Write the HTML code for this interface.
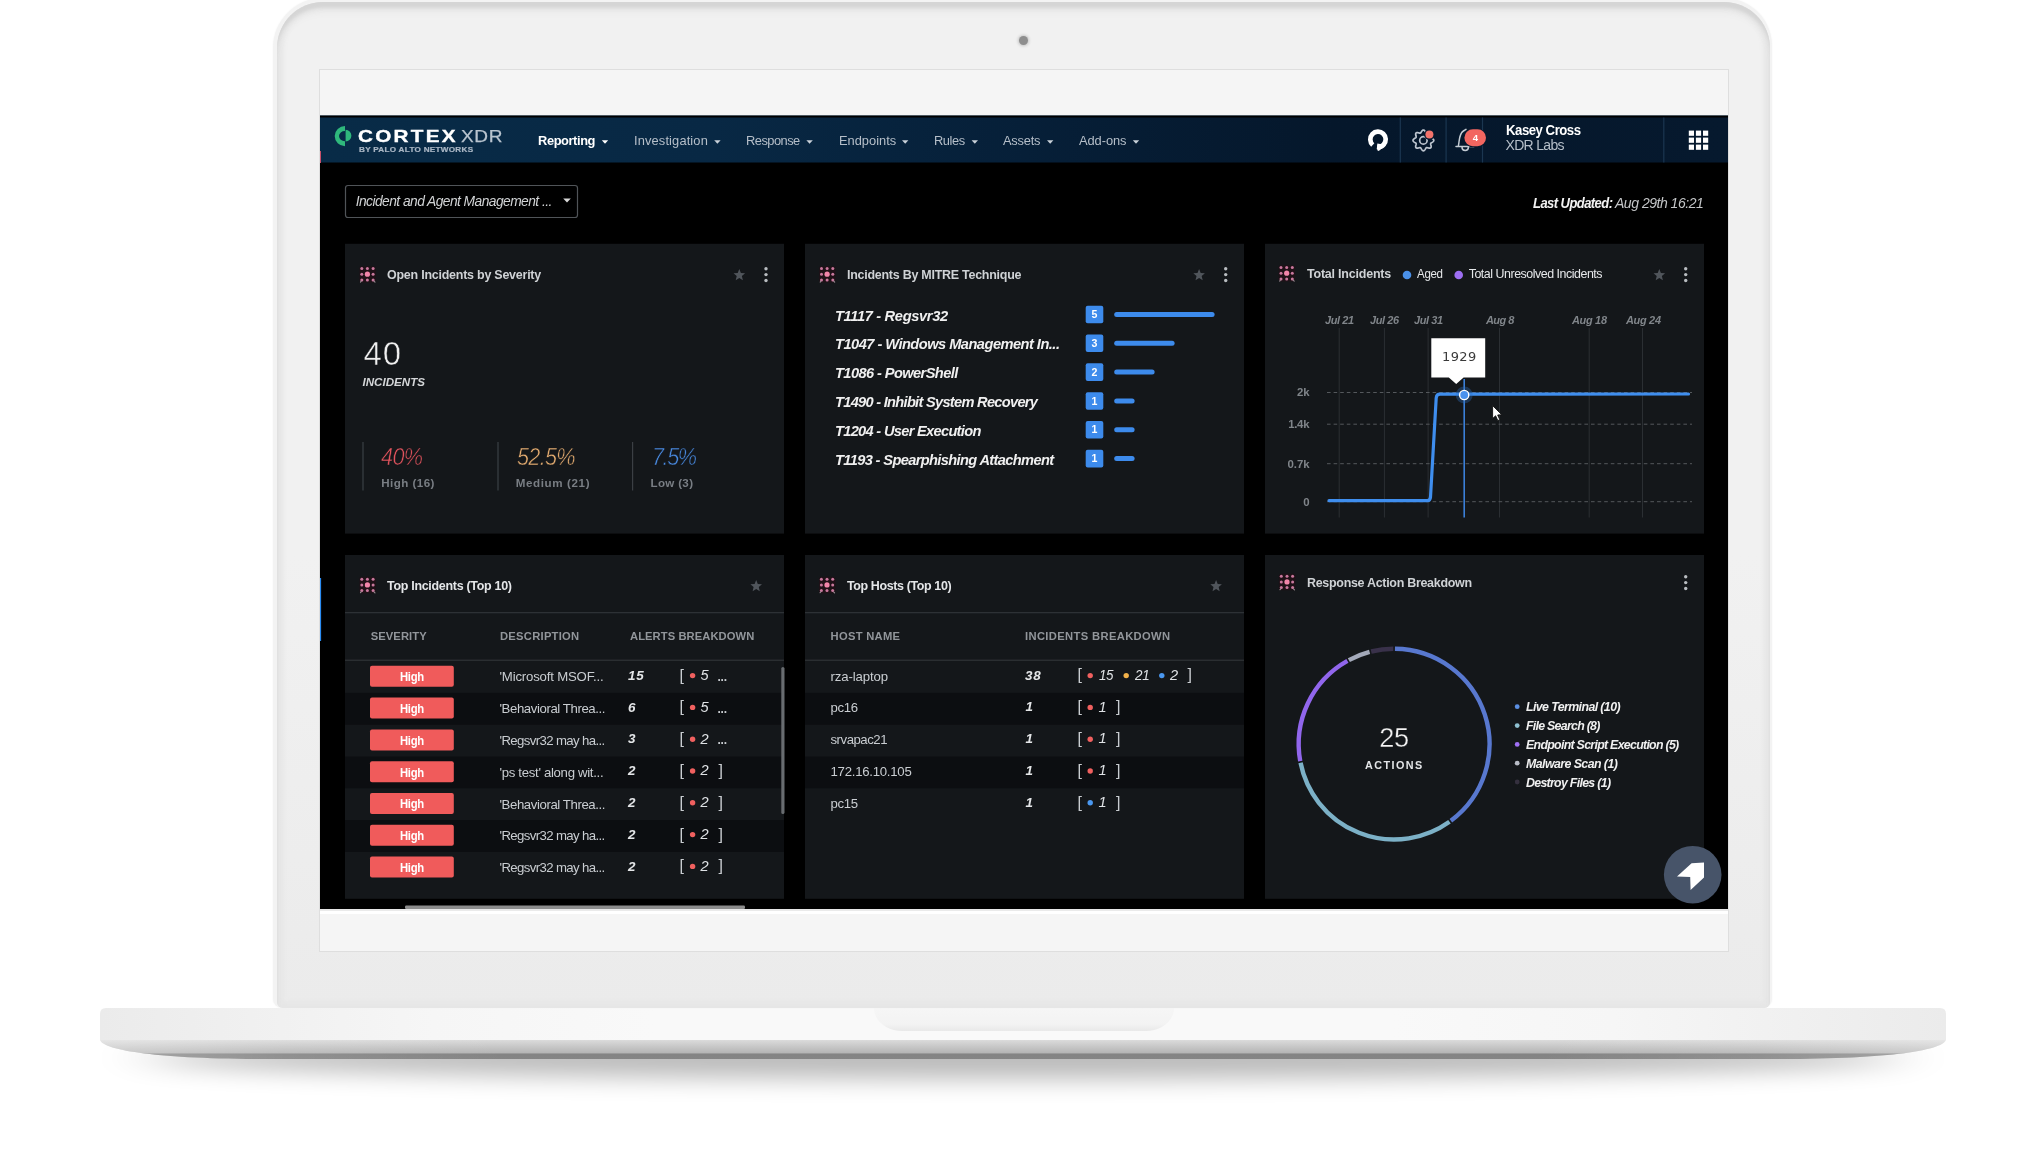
<!DOCTYPE html>
<html lang="en">
<head>
<meta charset="utf-8">
<title>Cortex XDR Dashboard</title>
<style>
*{box-sizing:border-box;margin:0;padding:0}
html,body{width:2036px;height:1176px;overflow:hidden;background:#fff}
body{position:relative;font-family:"Liberation Sans",sans-serif;color:#d8dadc}
.abs{position:absolute}
.t{position:absolute;white-space:nowrap;line-height:1}
/* laptop */
#lidout{left:273px;top:-2px;width:1499px;height:1010px;border-radius:50px 48px 9px 9px;background:#f3f3f3;box-shadow:0 0 2px 0 #f3f3f3}
#lid{left:277px;top:1.5px;width:1493px;height:1006px;border-radius:46px 46px 6px 6px;background:linear-gradient(#f1f1f1 0,#f1f1f1 55%,#ebebeb 100%);box-shadow:inset 0 6px 3px -0.5px #d5d5d5,inset 0 12px 8px -4px #e2e2e2,inset 0 0 5px 6px #e6e6e6}
#cam{left:1019px;top:36px;width:9px;height:9px;border-radius:50%;background:#8e8e8e;box-shadow:0 0 3px 1px #c4c4c4}
#glass{left:319px;top:69px;width:1409.5px;height:883px;background:#f5f5f5;border:1px solid #dedede}
/* app */
#app{left:320px;top:115px;width:1408px;height:794px;background:#000;overflow:hidden}
#scr{left:0;top:0;width:1408px;height:794px;filter:blur(.45px)}
#strip{left:320px;top:909px;width:1408px;height:5px;background:linear-gradient(#e6e6e6 0,#ececec 45%,#fff 50%,#fff 100%)}
</style>
</head>
<body>
<svg class="abs" style="left:0;top:990px" width="2036" height="186" viewBox="0 990 2036 186">
<defs>
<filter id="blur1" x="-10%" y="-200%" width="120%" height="500%"><feGaussianBlur stdDeviation="30 12"/></filter>
<linearGradient id="faceg" x1="0" x2="1" y1="0" y2="0"><stop offset="0" stop-color="#ebebeb"/><stop offset=".18" stop-color="#f6f6f6"/><stop offset=".3" stop-color="#f9f9f9"/><stop offset=".7" stop-color="#f9f9f9"/><stop offset=".82" stop-color="#f6f6f6"/><stop offset="1" stop-color="#ebebeb"/></linearGradient>
<linearGradient id="bevg" x1="0" x2="0" y1="1038" y2="1060" gradientUnits="userSpaceOnUse"><stop offset="0" stop-color="#e9e9e9"/><stop offset=".12" stop-color="#d9d9d9"/><stop offset=".66" stop-color="#b6b6b6"/><stop offset=".74" stop-color="#848484"/><stop offset="1" stop-color="#858585"/></linearGradient>
<linearGradient id="edgeg" x1="100" x2="1946" y1="0" y2="0" gradientUnits="userSpaceOnUse"><stop offset="0" stop-color="#fff" stop-opacity=".3"/><stop offset=".1" stop-color="#fff" stop-opacity=".1"/><stop offset=".22" stop-color="#fff" stop-opacity="0"/><stop offset=".78" stop-color="#fff" stop-opacity="0"/><stop offset=".9" stop-color="#fff" stop-opacity=".1"/><stop offset="1" stop-color="#fff" stop-opacity=".3"/></linearGradient>
<linearGradient id="notchg" x1="0" x2="0" y1="0" y2="1"><stop offset="0" stop-color="#f6f6f6"/><stop offset=".7" stop-color="#f3f3f3"/><stop offset="1" stop-color="#e9e9e9"/></linearGradient>
</defs>
<ellipse cx="1023" cy="1058" rx="880" ry="21" fill="#000" opacity=".27" filter="url(#blur1)"/>
<path id="bev" d="M100,1030 L1946,1030 L1946,1039 C1946,1050 1890,1059 1780,1059 L266,1059 C156,1059 100,1050 100,1039 Z" fill="url(#bevg)"/>
<path d="M100,1030 L1946,1030 L1946,1039 C1946,1050 1890,1059 1780,1059 L266,1059 C156,1059 100,1050 100,1039 Z" fill="url(#edgeg)"/>
<path d="M100,1014 Q100,1008 106,1008 L1940,1008 Q1946,1008 1946,1014 L1946,1040 L100,1040 Z" fill="url(#faceg)"/>
<path d="M874,1008 L1174,1008 C1174,1022 1160,1031 1146,1031 L902,1031 C888,1031 874,1022 874,1008 Z" fill="url(#notchg)"/>
</svg>
<div class="abs" id="lidout"></div>
<div class="abs" id="lid"></div>
<div class="abs" id="cam"></div>
<div class="abs" id="glass"></div>
<div class="abs" id="strip"></div>
<div class="abs" id="app">
<div class="abs" id="scr">
<svg class="abs" style="left:0;top:0" width="1409" height="794" viewBox="320 115 1409 794">
<defs>
<linearGradient id="navg" x1="320" x2="1729" y1="0" y2="0" gradientUnits="userSpaceOnUse"><stop offset="0" stop-color="#082b47"/><stop offset=".28" stop-color="#082844"/><stop offset=".5" stop-color="#061f38"/><stop offset=".72" stop-color="#05172b"/><stop offset="1" stop-color="#06192e"/></linearGradient>
<filter id="sblur" x="-50%" y="-50%" width="200%" height="200%"><feGaussianBlur stdDeviation="2.2"/></filter>
</defs>
<rect x="320" y="115" width="1409" height="0.9" fill="#55636d"/>
<rect x="320" y="117.5" width="1409" height="45" fill="url(#navg)"/>
<path d="M345,126 A10.3,10.1 0 0 0 345,146.2 L345,141.2 A6,5.1 0 0 1 345,131 Z M345.6,129.8 A5.8,5.9 0 0 1 345.6,141.6 Z" fill="#2fb87c"/>
<path d="M601.8,140.2 h6.4 l-3.2,3.6 Z" fill="#fff"/>
<path d="M714.2,140.2 h6.4 l-3.2,3.6 Z" fill="#c9d1d9"/>
<path d="M806.4,140.2 h6.4 l-3.2,3.6 Z" fill="#c9d1d9"/>
<path d="M902,140.2 h6.4 l-3.2,3.6 Z" fill="#c9d1d9"/>
<path d="M971.6,140.2 h6.4 l-3.2,3.6 Z" fill="#c9d1d9"/>
<path d="M1047,140.2 h6.4 l-3.2,3.6 Z" fill="#c9d1d9"/>
<path d="M1132.8,140.2 h6.4 l-3.2,3.6 Z" fill="#c9d1d9"/>
<rect x="1399.7" y="117.5" width="1.2" height="45" fill="#1b3650"/>
<rect x="1445.5" y="117.5" width="1.2" height="45" fill="#1b3650"/>
<rect x="1481.9" y="117.5" width="1.2" height="45" fill="#1b3650"/>
<rect x="1663.2" y="117.5" width="1.2" height="45" fill="#1b3650"/>
<circle cx="1378" cy="139.3" r="7.7" fill="none" stroke="#fff" stroke-width="4.7" stroke-dasharray="43.3 5.08" transform="rotate(133 1378 139.3)"/>
<path d="M1377.3,143.6 L1377.3,150.3 L1378.7,150.9 L1386,145 Z" fill="#fff"/>
<path d="M1423.40,130.00 L1423.81,130.07 L1424.20,130.27 L1424.56,130.58 L1424.89,130.98 L1425.19,131.43 L1425.45,131.88 L1425.68,132.30 L1425.92,132.66 L1426.16,132.93 L1426.42,133.10 L1426.73,133.17 L1427.09,133.15 L1427.51,133.06 L1427.98,132.93 L1428.48,132.79 L1429.01,132.68 L1429.52,132.64 L1430.00,132.67 L1430.42,132.81 L1430.75,133.05 L1430.99,133.38 L1431.13,133.80 L1431.16,134.28 L1431.12,134.79 L1431.01,135.32 L1430.87,135.82 L1430.74,136.29 L1430.65,136.71 L1430.63,137.07 L1430.70,137.38 L1430.87,137.64 L1431.14,137.88 L1431.50,138.12 L1431.92,138.35 L1432.37,138.61 L1432.82,138.91 L1433.22,139.24 L1433.53,139.60 L1433.73,139.99 L1433.80,140.40 L1433.73,140.81 L1433.53,141.20 L1433.22,141.56 L1432.82,141.89 L1432.37,142.19 L1431.92,142.45 L1431.50,142.68 L1431.14,142.92 L1430.87,143.16 L1430.70,143.42 L1430.63,143.73 L1430.65,144.09 L1430.74,144.51 L1430.87,144.98 L1431.01,145.48 L1431.12,146.01 L1431.16,146.52 L1431.13,147.00 L1430.99,147.42 L1430.75,147.75 L1430.42,147.99 L1430.00,148.13 L1429.52,148.16 L1429.01,148.12 L1428.48,148.01 L1427.98,147.87 L1427.51,147.74 L1427.09,147.65 L1426.73,147.63 L1426.42,147.70 L1426.16,147.87 L1425.92,148.14 L1425.68,148.50 L1425.45,148.92 L1425.19,149.37 L1424.89,149.82 L1424.56,150.22 L1424.20,150.53 L1423.81,150.73 L1423.40,150.80 L1422.99,150.73 L1422.60,150.53 L1422.24,150.22 L1421.91,149.82 L1421.61,149.37 L1421.35,148.92 L1421.12,148.50 L1420.88,148.14 L1420.64,147.87 L1420.38,147.70 L1420.07,147.63 L1419.71,147.65 L1419.29,147.74 L1418.82,147.87 L1418.32,148.01 L1417.79,148.12 L1417.28,148.16 L1416.80,148.13 L1416.38,147.99 L1416.05,147.75 L1415.81,147.42 L1415.67,147.00 L1415.64,146.52 L1415.68,146.01 L1415.79,145.48 L1415.93,144.98 L1416.06,144.51 L1416.15,144.09 L1416.17,143.73 L1416.10,143.42 L1415.93,143.16 L1415.66,142.92 L1415.30,142.68 L1414.88,142.45 L1414.43,142.19 L1413.98,141.89 L1413.58,141.56 L1413.27,141.20 L1413.07,140.81 L1413.00,140.40 L1413.07,139.99 L1413.27,139.60 L1413.58,139.24 L1413.98,138.91 L1414.43,138.61 L1414.88,138.35 L1415.30,138.12 L1415.66,137.88 L1415.93,137.64 L1416.10,137.38 L1416.17,137.07 L1416.15,136.71 L1416.06,136.29 L1415.93,135.82 L1415.79,135.32 L1415.68,134.79 L1415.64,134.28 L1415.67,133.80 L1415.81,133.38 L1416.05,133.05 L1416.38,132.81 L1416.80,132.67 L1417.28,132.64 L1417.79,132.68 L1418.32,132.79 L1418.82,132.93 L1419.29,133.06 L1419.71,133.15 L1420.07,133.17 L1420.38,133.10 L1420.64,132.93 L1420.88,132.66 L1421.12,132.30 L1421.35,131.88 L1421.61,131.43 L1421.91,130.98 L1422.24,130.58 L1422.60,130.27 L1422.99,130.07 Z" fill="none" stroke="#bcc4ce" stroke-width="1.7" stroke-linejoin="round"/>
<circle cx="1423.4" cy="140.4" r="3.7" fill="none" stroke="#bcc4ce" stroke-width="1.7"/>
<circle cx="1429.4" cy="134.5" r="5.3" fill="#06192d"/>
<circle cx="1429.4" cy="134.5" r="4" fill="#f3736b"/>
<path d="M1456,146.6 L1474,146.6 M1458.3,146.4 C1459.6,141 1458.6,134 1463.4,131 C1464.4,130.4 1465.2,130 1466,129.4 M1462,147.2 A3.2,3.2 0 0 0 1468.4,147.2" fill="none" stroke="#c4ccd4" stroke-width="1.5" stroke-linecap="round"/>
<rect x="1464.4" y="129.3" width="21.6" height="17" rx="8.5" fill="#06192d" stroke="#06192d" stroke-width="1.6"/>
<rect x="1464.4" y="129.3" width="21.6" height="17" rx="8.5" fill="#f26660"/>
<rect x="1688.8" y="130.6" width="5.2" height="5.2" fill="#fff"/>
<rect x="1695.9" y="130.6" width="5.2" height="5.2" fill="#fff"/>
<rect x="1703.0" y="130.6" width="5.2" height="5.2" fill="#fff"/>
<rect x="1688.8" y="137.6" width="5.2" height="5.2" fill="#fff"/>
<rect x="1695.9" y="137.6" width="5.2" height="5.2" fill="#fff"/>
<rect x="1703.0" y="137.6" width="5.2" height="5.2" fill="#fff"/>
<rect x="1688.8" y="144.6" width="5.2" height="5.2" fill="#fff"/>
<rect x="1695.9" y="144.6" width="5.2" height="5.2" fill="#fff"/>
<rect x="1703.0" y="144.6" width="5.2" height="5.2" fill="#fff"/>
<rect x="320" y="578" width="1.1" height="63" fill="#2b8cf2"/>
<rect x="320" y="151" width="1" height="12" fill="#c8506a"/>
<rect x="345.5" y="185.5" width="232" height="32" rx="2.5" fill="#000" stroke="#505458" stroke-width="1.2"/>
<path d="M563.2,198.4 h7.6 l-3.8,4 Z" fill="#d8d8d8"/>
<rect x="345" y="243.8" width="439" height="289.8" fill="#14171a"/>
<rect x="345" y="555" width="439" height="343.8" fill="#14171a"/>
<rect x="805" y="243.8" width="439" height="289.8" fill="#14171a"/>
<rect x="805" y="555" width="439" height="343.8" fill="#14171a"/>
<rect x="1265" y="243.8" width="439" height="289.8" fill="#14171a"/>
<rect x="1265" y="555" width="439" height="343.8" fill="#14171a"/>
<rect x="359.4" y="266.2" width="16.4" height="16.4" rx="2" fill="#2a0b14" opacity=".5"/>
<circle cx="361.8" cy="268.6" r="1.5" fill="#c9789d"/>
<circle cx="367.4" cy="268.6" r="1.5" fill="#c9789d"/>
<circle cx="373.1" cy="268.6" r="1.5" fill="#c9789d"/>
<circle cx="361.8" cy="274.2" r="1.5" fill="#c9789d"/>
<circle cx="367.4" cy="274.2" r="2.6" fill="#f285a9"/>
<circle cx="373.1" cy="274.2" r="1.5" fill="#c9789d"/>
<circle cx="361.8" cy="279.9" r="1.5" fill="#c9789d"/>
<circle cx="367.4" cy="279.9" r="1.5" fill="#c9789d"/>
<circle cx="373.1" cy="279.9" r="1.5" fill="#c9789d"/>
<path d="M361.2,281.2 l-0.7,0.9 M374.0,281.2 l1,1" stroke="#9a8d94" stroke-width="1.1" stroke-linecap="round"/>
<rect x="819.1" y="266.2" width="16.4" height="16.4" rx="2" fill="#2a0b14" opacity=".5"/>
<circle cx="821.5" cy="268.6" r="1.5" fill="#c9789d"/>
<circle cx="827.1" cy="268.6" r="1.5" fill="#c9789d"/>
<circle cx="832.8" cy="268.6" r="1.5" fill="#c9789d"/>
<circle cx="821.5" cy="274.2" r="1.5" fill="#c9789d"/>
<circle cx="827.1" cy="274.2" r="2.6" fill="#f285a9"/>
<circle cx="832.8" cy="274.2" r="1.5" fill="#c9789d"/>
<circle cx="821.5" cy="279.9" r="1.5" fill="#c9789d"/>
<circle cx="827.1" cy="279.9" r="1.5" fill="#c9789d"/>
<circle cx="832.8" cy="279.9" r="1.5" fill="#c9789d"/>
<path d="M820.9,281.2 l-0.7,0.9 M833.7,281.2 l1,1" stroke="#9a8d94" stroke-width="1.1" stroke-linecap="round"/>
<rect x="1278.6" y="265.2" width="16.4" height="16.4" rx="2" fill="#2a0b14" opacity=".5"/>
<circle cx="1281.0" cy="267.6" r="1.5" fill="#c9789d"/>
<circle cx="1286.7" cy="267.6" r="1.5" fill="#c9789d"/>
<circle cx="1292.3" cy="267.6" r="1.5" fill="#c9789d"/>
<circle cx="1281.0" cy="273.2" r="1.5" fill="#c9789d"/>
<circle cx="1286.7" cy="273.2" r="2.6" fill="#f285a9"/>
<circle cx="1292.3" cy="273.2" r="1.5" fill="#c9789d"/>
<circle cx="1281.0" cy="278.9" r="1.5" fill="#c9789d"/>
<circle cx="1286.7" cy="278.9" r="1.5" fill="#c9789d"/>
<circle cx="1292.3" cy="278.9" r="1.5" fill="#c9789d"/>
<path d="M1280.4,280.2 l-0.7,0.9 M1293.2,280.2 l1,1" stroke="#9a8d94" stroke-width="1.1" stroke-linecap="round"/>
<rect x="359.4" y="576.8" width="16.4" height="16.4" rx="2" fill="#2a0b14" opacity=".5"/>
<circle cx="361.8" cy="579.2" r="1.5" fill="#c9789d"/>
<circle cx="367.4" cy="579.2" r="1.5" fill="#c9789d"/>
<circle cx="373.1" cy="579.2" r="1.5" fill="#c9789d"/>
<circle cx="361.8" cy="584.9" r="1.5" fill="#c9789d"/>
<circle cx="367.4" cy="584.9" r="2.6" fill="#f285a9"/>
<circle cx="373.1" cy="584.9" r="1.5" fill="#c9789d"/>
<circle cx="361.8" cy="590.5" r="1.5" fill="#c9789d"/>
<circle cx="367.4" cy="590.5" r="1.5" fill="#c9789d"/>
<circle cx="373.1" cy="590.5" r="1.5" fill="#c9789d"/>
<path d="M361.2,591.8 l-0.7,0.9 M374.0,591.8 l1,1" stroke="#9a8d94" stroke-width="1.1" stroke-linecap="round"/>
<rect x="819.0" y="576.8" width="16.4" height="16.4" rx="2" fill="#2a0b14" opacity=".5"/>
<circle cx="821.4" cy="579.2" r="1.5" fill="#c9789d"/>
<circle cx="827.0" cy="579.2" r="1.5" fill="#c9789d"/>
<circle cx="832.7" cy="579.2" r="1.5" fill="#c9789d"/>
<circle cx="821.4" cy="584.9" r="1.5" fill="#c9789d"/>
<circle cx="827.0" cy="584.9" r="2.6" fill="#f285a9"/>
<circle cx="832.7" cy="584.9" r="1.5" fill="#c9789d"/>
<circle cx="821.4" cy="590.5" r="1.5" fill="#c9789d"/>
<circle cx="827.0" cy="590.5" r="1.5" fill="#c9789d"/>
<circle cx="832.7" cy="590.5" r="1.5" fill="#c9789d"/>
<path d="M820.8,591.8 l-0.7,0.9 M833.6,591.8 l1,1" stroke="#9a8d94" stroke-width="1.1" stroke-linecap="round"/>
<rect x="1278.9" y="573.8" width="16.4" height="16.4" rx="2" fill="#2a0b14" opacity=".5"/>
<circle cx="1281.3" cy="576.2" r="1.5" fill="#c9789d"/>
<circle cx="1287.0" cy="576.2" r="1.5" fill="#c9789d"/>
<circle cx="1292.6" cy="576.2" r="1.5" fill="#c9789d"/>
<circle cx="1281.3" cy="581.9" r="1.5" fill="#c9789d"/>
<circle cx="1287.0" cy="581.9" r="2.6" fill="#f285a9"/>
<circle cx="1292.6" cy="581.9" r="1.5" fill="#c9789d"/>
<circle cx="1281.3" cy="587.5" r="1.5" fill="#c9789d"/>
<circle cx="1287.0" cy="587.5" r="1.5" fill="#c9789d"/>
<circle cx="1292.6" cy="587.5" r="1.5" fill="#c9789d"/>
<path d="M1280.7,588.8 l-0.7,0.9 M1293.5,588.8 l1,1" stroke="#9a8d94" stroke-width="1.1" stroke-linecap="round"/>
<polygon points="739.30,269.10 740.89,273.02 745.10,273.31 741.87,276.03 742.89,280.14 739.30,277.90 735.71,280.14 736.73,276.03 733.50,273.31 737.71,273.02" fill="#50555b"/>
<polygon points="1199.10,269.10 1200.69,273.02 1204.90,273.31 1201.67,276.03 1202.69,280.14 1199.10,277.90 1195.51,280.14 1196.53,276.03 1193.30,273.31 1197.51,273.02" fill="#50555b"/>
<polygon points="1659.30,269.10 1660.89,273.02 1665.10,273.31 1661.87,276.03 1662.89,280.14 1659.30,277.90 1655.71,280.14 1656.73,276.03 1653.50,273.31 1657.71,273.02" fill="#50555b"/>
<polygon points="756.20,580.10 757.79,584.02 762.00,584.31 758.77,587.03 759.79,591.14 756.20,588.90 752.61,591.14 753.63,587.03 750.40,584.31 754.61,584.02" fill="#50555b"/>
<polygon points="1216.10,580.10 1217.69,584.02 1221.90,584.31 1218.67,587.03 1219.69,591.14 1216.10,588.90 1212.51,591.14 1213.53,587.03 1210.30,584.31 1214.51,584.02" fill="#50555b"/>
<circle cx="766" cy="268.8" r="1.7" fill="#b9bdc1"/>
<circle cx="766" cy="274.6" r="1.7" fill="#b9bdc1"/>
<circle cx="766" cy="280.5" r="1.7" fill="#b9bdc1"/>
<circle cx="1225.7" cy="268.8" r="1.7" fill="#b9bdc1"/>
<circle cx="1225.7" cy="274.6" r="1.7" fill="#b9bdc1"/>
<circle cx="1225.7" cy="280.5" r="1.7" fill="#b9bdc1"/>
<circle cx="1685.7" cy="268.8" r="1.7" fill="#b9bdc1"/>
<circle cx="1685.7" cy="274.6" r="1.7" fill="#b9bdc1"/>
<circle cx="1685.7" cy="280.5" r="1.7" fill="#b9bdc1"/>
<circle cx="1685.7" cy="576.8" r="1.7" fill="#b9bdc1"/>
<circle cx="1685.7" cy="582.6" r="1.7" fill="#b9bdc1"/>
<circle cx="1685.7" cy="588.5" r="1.7" fill="#b9bdc1"/>
<rect x="362.4" y="442" width="1.2" height="48.5" fill="#3b3f44"/>
<rect x="497.4" y="442" width="1.2" height="48.5" fill="#3b3f44"/>
<rect x="632.0" y="442" width="1.2" height="48.5" fill="#3b3f44"/>
<rect x="1085.7" y="305.7" width="17.6" height="17.6" rx="2" fill="#3d8bec"/>
<rect x="1114.2" y="311.9" width="100.4" height="5" rx="2.5" fill="#3d8bec"/>
<rect x="1085.7" y="334.5" width="17.6" height="17.6" rx="2" fill="#3d8bec"/>
<rect x="1114.2" y="340.7" width="60.4" height="5" rx="2.5" fill="#3d8bec"/>
<rect x="1085.7" y="363.3" width="17.6" height="17.6" rx="2" fill="#3d8bec"/>
<rect x="1114.2" y="369.5" width="40.4" height="5" rx="2.5" fill="#3d8bec"/>
<rect x="1085.7" y="392.2" width="17.6" height="17.6" rx="2" fill="#3d8bec"/>
<rect x="1114.2" y="398.4" width="20.4" height="5" rx="2.5" fill="#3d8bec"/>
<rect x="1085.7" y="421.0" width="17.6" height="17.6" rx="2" fill="#3d8bec"/>
<rect x="1114.2" y="427.2" width="20.4" height="5" rx="2.5" fill="#3d8bec"/>
<rect x="1085.7" y="449.8" width="17.6" height="17.6" rx="2" fill="#3d8bec"/>
<rect x="1114.2" y="456.0" width="20.4" height="5" rx="2.5" fill="#3d8bec"/>
<rect x="1338.7" y="328" width="1" height="189.5" fill="#2b2f33"/>
<rect x="1383.9" y="328" width="1" height="189.5" fill="#2b2f33"/>
<rect x="1427.6" y="328" width="1" height="189.5" fill="#2b2f33"/>
<rect x="1499.0" y="328" width="1" height="189.5" fill="#2b2f33"/>
<rect x="1588.7" y="328" width="1" height="189.5" fill="#2b2f33"/>
<rect x="1642.0" y="328" width="1" height="189.5" fill="#2b2f33"/>
<path d="M1327,392.5 H1692" stroke="#54585c" stroke-width="1" stroke-dasharray="3.6 3"/>
<path d="M1327,424.2 H1692" stroke="#54585c" stroke-width="1" stroke-dasharray="3.6 3"/>
<path d="M1327,463.7 H1692" stroke="#54585c" stroke-width="1" stroke-dasharray="3.6 3"/>
<path d="M1327,501.7 H1692" stroke="#54585c" stroke-width="1" stroke-dasharray="3.6 3"/>
<rect x="1463.4" y="379" width="1.6" height="138.5" fill="#3b7fd8"/>
<path d="M1329,500.6 L1427.6,500.6 Q1430.2,500.6 1430.5,497 L1436.2,398 Q1436.5,394.2 1440,394.2 L1688.5,394" fill="none" stroke="#3f8eee" stroke-width="3.2" stroke-linecap="round" stroke-linejoin="round"/>
<circle cx="1464.2" cy="395" r="8.5" fill="#2f6fc4" opacity=".35"/>
<circle cx="1464.2" cy="395" r="4.6" fill="#4a92ee" stroke="#fff" stroke-width="1.4"/>
<path d="M1431.3,338.2 H1485.2 V377.6 H1463.6 L1456.2,384 L1448.8,377.6 H1431.3 Z" fill="#fff"/>
<path d="M1492.6,405.6 L1492.6,418.6 L1495.6,415.8 L1497.8,420.6 L1499.8,419.7 L1497.7,415 L1501.8,414.8 Z" fill="#fff" stroke="#111" stroke-width="0.9" stroke-linejoin="round"/>
<circle cx="1407" cy="275" r="4.3" fill="#4a90e8"/>
<circle cx="1458.7" cy="275" r="4.3" fill="#9d6ef2"/>
<rect x="345" y="612" width="439" height="1.3" fill="#2d3135"/>
<rect x="345" y="659.6" width="439" height="1.3" fill="#2d3135"/>
<rect x="805" y="612" width="439" height="1.3" fill="#2d3135"/>
<rect x="805" y="659.6" width="439" height="1.3" fill="#2d3135"/>
<rect x="370" y="665.8" width="83.8" height="21" rx="2" fill="#f05b5b"/>
<rect x="345" y="692.9" width="439" height="31.8" fill="#0c0e11"/>
<rect x="370" y="697.6" width="83.8" height="21" rx="2" fill="#f05b5b"/>
<rect x="370" y="729.4" width="83.8" height="21" rx="2" fill="#f05b5b"/>
<rect x="345" y="756.5" width="439" height="31.8" fill="#0c0e11"/>
<rect x="370" y="761.2" width="83.8" height="21" rx="2" fill="#f05b5b"/>
<rect x="370" y="793.0" width="83.8" height="21" rx="2" fill="#f05b5b"/>
<rect x="345" y="820.1" width="439" height="31.8" fill="#0c0e11"/>
<rect x="370" y="824.8" width="83.8" height="21" rx="2" fill="#f05b5b"/>
<rect x="370" y="856.6" width="83.8" height="21" rx="2" fill="#f05b5b"/>
<rect x="805" y="692.9" width="439" height="31.8" fill="#0c0e11"/>
<rect x="805" y="756.5" width="439" height="31.8" fill="#0c0e11"/>
<rect x="781.3" y="667" width="3.2" height="147" rx="1.6" fill="#686c70"/>
<rect x="405" y="905.6" width="340" height="3.4" rx="1.2" fill="#8c8c8c"/>
<circle cx="692.6" cy="675.6" r="2.7" fill="#f0605f"/>
<circle cx="692.6" cy="707.4" r="2.7" fill="#f0605f"/>
<circle cx="692.6" cy="739.2" r="2.7" fill="#f0605f"/>
<circle cx="692.6" cy="771.0" r="2.7" fill="#f0605f"/>
<circle cx="692.6" cy="802.8" r="2.7" fill="#f0605f"/>
<circle cx="692.6" cy="834.6" r="2.7" fill="#f0605f"/>
<circle cx="692.6" cy="866.4" r="2.7" fill="#f0605f"/>
<circle cx="1090.2" cy="675.6" r="2.7" fill="#f0605f"/>
<circle cx="1126.2" cy="675.6" r="2.7" fill="#f2b24a"/>
<circle cx="1161.8" cy="675.6" r="2.7" fill="#4a98f0"/>
<circle cx="1090.2" cy="707.4" r="2.7" fill="#f0605f"/>
<circle cx="1090.2" cy="739.2" r="2.7" fill="#f0605f"/>
<circle cx="1090.2" cy="771.0" r="2.7" fill="#f0605f"/>
<circle cx="1090.2" cy="802.8" r="2.7" fill="#4a98f0"/>
<path d="M1394.93,648.70 A95.4,95.4 0 0 1 1450.85,820.79" fill="none" stroke="#5878cf" stroke-width="4.4"/>
<path d="M1449.50,821.77 A95.4,95.4 0 0 1 1300.55,762.79" fill="none" stroke="#7cb1c7" stroke-width="4.4"/>
<path d="M1300.24,761.16 A95.4,95.4 0 0 1 1347.41,660.90" fill="none" stroke="#9166ec" stroke-width="4.4"/>
<path d="M1348.87,660.10 A95.4,95.4 0 0 1 1369.57,651.91" fill="none" stroke="#a3a9b9" stroke-width="4.4"/>
<path d="M1371.18,651.49 A95.4,95.4 0 0 1 1393.27,648.70" fill="none" stroke="#39314a" stroke-width="4.4"/>
<circle cx="1517.2" cy="706.7" r="2.4" fill="#5b8fe2"/>
<circle cx="1517.2" cy="725.6" r="2.4" fill="#8fc1d2"/>
<circle cx="1517.2" cy="744.4" r="2.4" fill="#a070f5"/>
<circle cx="1517.2" cy="763.2" r="2.4" fill="#b8bcc6"/>
<circle cx="1517.2" cy="782.0" r="2.4" fill="#34303e"/>
<circle cx="1692.7" cy="874.7" r="28.8" fill="#475469"/>
<path d="M1677,876.6 L1691.6,863.2 L1704,862.4 L1704,877.4 L1690.6,890 L1690.2,876.9 Z" fill="#fff"/>
</svg>
<div class="t" style="left:38.0px;top:13.3px;font-size:16.4px;font-weight:700;letter-spacing:1.81px;color:#fff;-webkit-text-stroke:0.35px #fff;transform:scaleX(1.26);transform-origin:0 0;">CORTEX</div>
<div class="t" style="left:141.0px;top:13.3px;font-size:16.4px;letter-spacing:0.58px;color:#b9c4cf;-webkit-text-stroke:0.25px #b9c4cf;transform:scaleX(1.16);transform-origin:0 0;">XDR</div>
<div class="t" style="left:38.7px;top:32.2px;font-size:6.5px;font-weight:700;letter-spacing:0.23px;color:#a9b6c4;-webkit-text-stroke:0.2px #a9b6c4;transform:scaleX(1.25);transform-origin:0 0;">BY PALO ALTO NETWORKS</div>
<div class="t" style="left:217.5px;top:18.5px;font-size:13.4px;font-weight:700;letter-spacing:-0.42px;color:#ffffff;transform:scaleX(0.96);transform-origin:0 0;">Reporting</div>
<div class="t" style="left:313.7px;top:18.5px;font-size:13.4px;letter-spacing:0.14px;color:#b6bfc9;transform:scaleX(0.96);transform-origin:0 0;">Investigation</div>
<div class="t" style="left:425.7px;top:18.5px;font-size:13.4px;letter-spacing:-0.54px;color:#b6bfc9;transform:scaleX(0.96);transform-origin:0 0;">Response</div>
<div class="t" style="left:518.5px;top:18.5px;font-size:13.4px;letter-spacing:0.00px;color:#b6bfc9;transform:scaleX(0.96);transform-origin:0 0;">Endpoints</div>
<div class="t" style="left:614.0px;top:18.5px;font-size:13.4px;letter-spacing:-0.44px;color:#b6bfc9;transform:scaleX(0.96);transform-origin:0 0;">Rules</div>
<div class="t" style="left:683.2px;top:18.5px;font-size:13.4px;letter-spacing:-0.23px;color:#b6bfc9;transform:scaleX(0.96);transform-origin:0 0;">Assets</div>
<div class="t" style="left:759.0px;top:18.5px;font-size:13.4px;letter-spacing:-0.07px;color:#b6bfc9;transform:scaleX(0.96);transform-origin:0 0;">Add-ons</div>
<div class="t" style="left:1152.7px;top:18.3px;font-size:9.6px;font-weight:700;color:#ffffff;">4</div>
<div class="t" style="left:1186.0px;top:7.7px;font-size:14px;font-weight:700;letter-spacing:-0.50px;color:#ffffff;transform:scaleX(0.94);transform-origin:0 0;">Kasey Cross</div>
<div class="t" style="left:1185.5px;top:23.3px;font-size:14px;letter-spacing:-0.69px;color:#b6bfc9;">XDR Labs</div>
<div class="t" style="left:35.7px;top:79.5px;font-size:13.8px;font-style:italic;letter-spacing:-0.55px;color:#d2d4d6;">Incident and Agent Management ...</div>
<div class="t" style="left:1212.5px;top:81.3px;font-size:14px;font-weight:700;font-style:italic;letter-spacing:-0.61px;color:#f2f2f2;transform:scaleX(0.93);transform-origin:0 0;">Last Updated:</div>
<div class="t" style="left:1295.0px;top:81.3px;font-size:14px;font-style:italic;letter-spacing:-0.48px;color:#c4c6c8;">Aug 29th 16:21</div>
<div class="t" style="left:67.0px;top:152.6px;font-size:13px;font-weight:700;letter-spacing:-0.25px;color:#cfd2d5;transform:scaleX(0.96);transform-origin:0 0;">Open Incidents by Severity</div>
<div class="t" style="left:526.5px;top:152.6px;font-size:13px;font-weight:700;letter-spacing:-0.27px;color:#cfd2d5;transform:scaleX(0.96);transform-origin:0 0;">Incidents By MITRE Technique</div>
<div class="t" style="left:987.0px;top:152.0px;font-size:13px;font-weight:700;letter-spacing:-0.22px;color:#cfd2d5;transform:scaleX(0.96);transform-origin:0 0;">Total Incidents</div>
<div class="t" style="left:1097.0px;top:153.1px;font-size:12.4px;letter-spacing:-0.33px;color:#e6e8ea;transform:scaleX(0.93);transform-origin:0 0;">Aged</div>
<div class="t" style="left:1148.7px;top:153.1px;font-size:12.4px;letter-spacing:-0.46px;color:#e6e8ea;">Total Unresolved Incidents</div>
<div class="t" style="left:67.0px;top:463.6px;font-size:13px;font-weight:700;letter-spacing:-0.31px;color:#e4e6e8;transform:scaleX(0.96);transform-origin:0 0;">Top Incidents (Top 10)</div>
<div class="t" style="left:527.0px;top:463.6px;font-size:13px;font-weight:700;letter-spacing:-0.40px;color:#e4e6e8;transform:scaleX(0.96);transform-origin:0 0;">Top Hosts (Top 10)</div>
<div class="t" style="left:987.0px;top:460.8px;font-size:13px;font-weight:700;letter-spacing:-0.31px;color:#cfd2d5;transform:scaleX(0.96);transform-origin:0 0;">Response Action Breakdown</div>
<div class="t" style="left:43.6px;top:222.1px;font-size:33px;letter-spacing:0.68px;color:#f0f0f0;-webkit-text-stroke:0.55px #14171a;">40</div>
<div class="t" style="left:42.5px;top:261.4px;font-size:11.6px;font-weight:700;font-style:italic;letter-spacing:0.00px;color:#d4d6d8;">INCIDENTS</div>
<div class="t" style="left:61.2px;top:329.9px;font-size:24.6px;font-style:italic;letter-spacing:-0.75px;color:#e2545e;-webkit-text-stroke:0.55px #14171a;transform:scaleX(0.88);transform-origin:0 0;">40%</div>
<div class="t" style="left:197.0px;top:329.9px;font-size:24.6px;font-style:italic;letter-spacing:-0.81px;color:#e9b073;-webkit-text-stroke:0.55px #14171a;transform:scaleX(0.88);transform-origin:0 0;">52.5%</div>
<div class="t" style="left:332.0px;top:329.9px;font-size:24.6px;font-style:italic;letter-spacing:-1.64px;color:#4a8be2;-webkit-text-stroke:0.55px #14171a;transform:scaleX(0.88);transform-origin:0 0;">7.5%</div>
<div class="t" style="left:61.2px;top:362.2px;font-size:11.6px;font-weight:700;letter-spacing:0.46px;color:#797e84;">High (16)</div>
<div class="t" style="left:195.7px;top:362.2px;font-size:11.6px;font-weight:700;letter-spacing:0.62px;color:#797e84;">Medium (21)</div>
<div class="t" style="left:330.5px;top:362.2px;font-size:11.6px;font-weight:700;letter-spacing:0.32px;color:#797e84;">Low (3)</div>
<div class="t" style="left:515.3px;top:192.5px;font-size:15.4px;font-weight:700;font-style:italic;letter-spacing:-0.35px;color:#f0f0f0;transform:scaleX(0.95);transform-origin:0 0;">T1117 - Regsvr32</div>
<div class="t" style="left:771.5px;top:194.1px;font-size:10.6px;font-weight:700;color:#ffffff;">5</div>
<div class="t" style="left:515.3px;top:221.3px;font-size:15.4px;font-weight:700;font-style:italic;letter-spacing:-0.55px;color:#f0f0f0;transform:scaleX(0.95);transform-origin:0 0;">T1047 - Windows Management In...</div>
<div class="t" style="left:771.5px;top:222.9px;font-size:10.6px;font-weight:700;color:#ffffff;">3</div>
<div class="t" style="left:515.3px;top:250.1px;font-size:15.4px;font-weight:700;font-style:italic;letter-spacing:-0.62px;color:#f0f0f0;transform:scaleX(0.95);transform-origin:0 0;">T1086 - PowerShell</div>
<div class="t" style="left:771.5px;top:251.7px;font-size:10.6px;font-weight:700;color:#ffffff;">2</div>
<div class="t" style="left:515.3px;top:279.0px;font-size:15.4px;font-weight:700;font-style:italic;letter-spacing:-0.75px;color:#f0f0f0;transform:scaleX(0.95);transform-origin:0 0;">T1490 - Inhibit System Recovery</div>
<div class="t" style="left:771.5px;top:280.6px;font-size:10.6px;font-weight:700;color:#ffffff;">1</div>
<div class="t" style="left:515.3px;top:307.8px;font-size:15.4px;font-weight:700;font-style:italic;letter-spacing:-0.73px;color:#f0f0f0;transform:scaleX(0.95);transform-origin:0 0;">T1204 - User Execution</div>
<div class="t" style="left:771.5px;top:309.4px;font-size:10.6px;font-weight:700;color:#ffffff;">1</div>
<div class="t" style="left:515.3px;top:336.6px;font-size:15.4px;font-weight:700;font-style:italic;letter-spacing:-0.67px;color:#f0f0f0;transform:scaleX(0.95);transform-origin:0 0;">T1193 - Spearphishing Attachment</div>
<div class="t" style="left:771.5px;top:338.2px;font-size:10.6px;font-weight:700;color:#ffffff;">1</div>
<div class="t" style="left:1005.0px;top:200.0px;font-size:11.8px;font-weight:700;font-style:italic;letter-spacing:-0.41px;color:#80858a;transform:scaleX(0.93);transform-origin:0 0;">Jul 21</div>
<div class="t" style="left:1049.5px;top:200.0px;font-size:11.8px;font-weight:700;font-style:italic;letter-spacing:-0.41px;color:#80858a;transform:scaleX(0.93);transform-origin:0 0;">Jul 26</div>
<div class="t" style="left:1094.2px;top:200.0px;font-size:11.8px;font-weight:700;font-style:italic;letter-spacing:-0.45px;color:#80858a;transform:scaleX(0.93);transform-origin:0 0;">Jul 31</div>
<div class="t" style="left:1166.2px;top:200.0px;font-size:11.8px;font-weight:700;font-style:italic;letter-spacing:-0.59px;color:#80858a;transform:scaleX(0.93);transform-origin:0 0;">Aug 8</div>
<div class="t" style="left:1252.0px;top:200.0px;font-size:11.8px;font-weight:700;font-style:italic;letter-spacing:-0.34px;color:#80858a;transform:scaleX(0.93);transform-origin:0 0;">Aug 18</div>
<div class="t" style="left:1305.7px;top:200.0px;font-size:11.8px;font-weight:700;font-style:italic;letter-spacing:-0.34px;color:#80858a;transform:scaleX(0.93);transform-origin:0 0;">Aug 24</div>
<div class="t" style="left:977.0px;top:271.7px;font-size:11.4px;font-weight:700;letter-spacing:-0.17px;color:#80858a;">2k</div>
<div class="t" style="left:968.2px;top:304.1px;font-size:11.4px;font-weight:700;letter-spacing:-0.29px;color:#80858a;">1.4k</div>
<div class="t" style="left:967.5px;top:343.5px;font-size:11.4px;font-weight:700;letter-spacing:-0.06px;color:#80858a;">0.7k</div>
<div class="t" style="left:983.2px;top:381.5px;font-size:11.4px;font-weight:700;color:#80858a;">0</div>
<div class="t" style="left:1122.0px;top:234.7px;font-size:13px;font-family:'DejaVu Sans',sans-serif;letter-spacing:0.37px;color:#3a3a3a;">1929</div>
<div class="t" style="left:50.7px;top:516.0px;font-size:11.2px;font-weight:700;letter-spacing:0.09px;color:#92969b;">SEVERITY</div>
<div class="t" style="left:180.0px;top:516.0px;font-size:11.2px;font-weight:700;letter-spacing:0.27px;color:#92969b;">DESCRIPTION</div>
<div class="t" style="left:310.0px;top:516.0px;font-size:11.2px;font-weight:700;letter-spacing:0.08px;color:#92969b;">ALERTS BREAKDOWN</div>
<div class="t" style="left:79.5px;top:556.1px;font-size:12px;font-weight:700;letter-spacing:-0.31px;color:#ffffff;transform:scaleX(0.94);transform-origin:0 0;">High</div>
<div class="t" style="left:179.5px;top:555.4px;font-size:13.2px;letter-spacing:-0.18px;color:#c9cdd1;">&#x27;Microsoft MSOF...</div>
<div class="t" style="left:308.0px;top:553.7px;font-size:13.4px;font-weight:700;font-style:italic;letter-spacing:0.79px;color:#e4e6e8;">15</div>
<div class="t" style="left:359.6px;top:552.5px;font-size:16px;color:#c9cdd1;">[</div>
<div class="t" style="left:380.6px;top:553.0px;font-size:14.6px;font-style:italic;color:#dfe2e5;">5</div>
<div class="t" style="left:397.4px;top:555.8px;font-size:12px;font-weight:700;letter-spacing:-0.21px;color:#c9cdd1;">...</div>
<div class="t" style="left:79.5px;top:587.9px;font-size:12px;font-weight:700;letter-spacing:-0.31px;color:#ffffff;transform:scaleX(0.94);transform-origin:0 0;">High</div>
<div class="t" style="left:179.5px;top:587.2px;font-size:13.2px;letter-spacing:-0.41px;color:#c9cdd1;">&#x27;Behavioral Threa...</div>
<div class="t" style="left:308.0px;top:585.5px;font-size:13.4px;font-weight:700;font-style:italic;color:#e4e6e8;">6</div>
<div class="t" style="left:359.6px;top:584.3px;font-size:16px;color:#c9cdd1;">[</div>
<div class="t" style="left:380.6px;top:584.8px;font-size:14.6px;font-style:italic;color:#dfe2e5;">5</div>
<div class="t" style="left:397.4px;top:587.6px;font-size:12px;font-weight:700;letter-spacing:-0.21px;color:#c9cdd1;">...</div>
<div class="t" style="left:79.5px;top:619.7px;font-size:12px;font-weight:700;letter-spacing:-0.31px;color:#ffffff;transform:scaleX(0.94);transform-origin:0 0;">High</div>
<div class="t" style="left:179.5px;top:619.0px;font-size:13.2px;letter-spacing:-0.62px;color:#c9cdd1;">&#x27;Regsvr32 may ha...</div>
<div class="t" style="left:308.0px;top:617.3px;font-size:13.4px;font-weight:700;font-style:italic;color:#e4e6e8;">3</div>
<div class="t" style="left:359.6px;top:616.1px;font-size:16px;color:#c9cdd1;">[</div>
<div class="t" style="left:380.6px;top:616.6px;font-size:14.6px;font-style:italic;color:#dfe2e5;">2</div>
<div class="t" style="left:397.4px;top:619.4px;font-size:12px;font-weight:700;letter-spacing:-0.21px;color:#c9cdd1;">...</div>
<div class="t" style="left:79.5px;top:651.5px;font-size:12px;font-weight:700;letter-spacing:-0.31px;color:#ffffff;transform:scaleX(0.94);transform-origin:0 0;">High</div>
<div class="t" style="left:179.5px;top:650.8px;font-size:13.2px;letter-spacing:-0.31px;color:#c9cdd1;">&#x27;ps test&#x27; along wit...</div>
<div class="t" style="left:308.0px;top:649.1px;font-size:13.4px;font-weight:700;font-style:italic;color:#e4e6e8;">2</div>
<div class="t" style="left:359.6px;top:647.9px;font-size:16px;color:#c9cdd1;">[</div>
<div class="t" style="left:380.6px;top:648.4px;font-size:14.6px;font-style:italic;color:#dfe2e5;">2</div>
<div class="t" style="left:398.4px;top:647.9px;font-size:16px;color:#c9cdd1;">]</div>
<div class="t" style="left:79.5px;top:683.3px;font-size:12px;font-weight:700;letter-spacing:-0.31px;color:#ffffff;transform:scaleX(0.94);transform-origin:0 0;">High</div>
<div class="t" style="left:179.5px;top:682.6px;font-size:13.2px;letter-spacing:-0.41px;color:#c9cdd1;">&#x27;Behavioral Threa...</div>
<div class="t" style="left:308.0px;top:680.9px;font-size:13.4px;font-weight:700;font-style:italic;color:#e4e6e8;">2</div>
<div class="t" style="left:359.6px;top:679.7px;font-size:16px;color:#c9cdd1;">[</div>
<div class="t" style="left:380.6px;top:680.2px;font-size:14.6px;font-style:italic;color:#dfe2e5;">2</div>
<div class="t" style="left:398.4px;top:679.7px;font-size:16px;color:#c9cdd1;">]</div>
<div class="t" style="left:79.5px;top:715.1px;font-size:12px;font-weight:700;letter-spacing:-0.31px;color:#ffffff;transform:scaleX(0.94);transform-origin:0 0;">High</div>
<div class="t" style="left:179.5px;top:714.4px;font-size:13.2px;letter-spacing:-0.62px;color:#c9cdd1;">&#x27;Regsvr32 may ha...</div>
<div class="t" style="left:308.0px;top:712.7px;font-size:13.4px;font-weight:700;font-style:italic;color:#e4e6e8;">2</div>
<div class="t" style="left:359.6px;top:711.5px;font-size:16px;color:#c9cdd1;">[</div>
<div class="t" style="left:380.6px;top:712.0px;font-size:14.6px;font-style:italic;color:#dfe2e5;">2</div>
<div class="t" style="left:398.4px;top:711.5px;font-size:16px;color:#c9cdd1;">]</div>
<div class="t" style="left:79.5px;top:746.9px;font-size:12px;font-weight:700;letter-spacing:-0.31px;color:#ffffff;transform:scaleX(0.94);transform-origin:0 0;">High</div>
<div class="t" style="left:179.5px;top:746.2px;font-size:13.2px;letter-spacing:-0.62px;color:#c9cdd1;">&#x27;Regsvr32 may ha...</div>
<div class="t" style="left:308.0px;top:744.5px;font-size:13.4px;font-weight:700;font-style:italic;color:#e4e6e8;">2</div>
<div class="t" style="left:359.6px;top:743.3px;font-size:16px;color:#c9cdd1;">[</div>
<div class="t" style="left:380.6px;top:743.8px;font-size:14.6px;font-style:italic;color:#dfe2e5;">2</div>
<div class="t" style="left:398.4px;top:743.3px;font-size:16px;color:#c9cdd1;">]</div>
<div class="t" style="left:510.5px;top:515.5px;font-size:11.2px;font-weight:700;letter-spacing:0.30px;color:#92969b;">HOST NAME</div>
<div class="t" style="left:705.0px;top:515.5px;font-size:11.2px;font-weight:700;letter-spacing:0.36px;color:#92969b;">INCIDENTS BREAKDOWN</div>
<div class="t" style="left:510.5px;top:554.6px;font-size:13.2px;letter-spacing:-0.13px;color:#c9cdd1;">rza-laptop</div>
<div class="t" style="left:705.0px;top:553.5px;font-size:13.4px;font-weight:700;font-style:italic;letter-spacing:0.79px;color:#e4e6e8;">38</div>
<div class="t" style="left:757.4px;top:552.3px;font-size:16px;color:#c9cdd1;">[</div>
<div class="t" style="left:779.2px;top:552.8px;font-size:14.6px;font-style:italic;letter-spacing:-0.47px;color:#dfe2e5;transform:scaleX(0.92);transform-origin:0 0;">15</div>
<div class="t" style="left:814.5px;top:552.8px;font-size:14.6px;font-style:italic;letter-spacing:-0.26px;color:#dfe2e5;transform:scaleX(0.92);transform-origin:0 0;">21</div>
<div class="t" style="left:850.0px;top:552.8px;font-size:14.6px;font-style:italic;color:#dfe2e5;">2</div>
<div class="t" style="left:867.6px;top:552.3px;font-size:16px;color:#c9cdd1;">]</div>
<div class="t" style="left:510.5px;top:586.4px;font-size:13.2px;letter-spacing:-0.37px;color:#c9cdd1;">pc16</div>
<div class="t" style="left:705.6px;top:585.3px;font-size:13.4px;font-weight:700;font-style:italic;color:#e4e6e8;">1</div>
<div class="t" style="left:757.4px;top:584.1px;font-size:16px;color:#c9cdd1;">[</div>
<div class="t" style="left:778.6px;top:584.6px;font-size:14.6px;font-style:italic;color:#dfe2e5;">1</div>
<div class="t" style="left:796.0px;top:584.1px;font-size:16px;color:#c9cdd1;">]</div>
<div class="t" style="left:510.5px;top:618.2px;font-size:13.2px;letter-spacing:-0.48px;color:#c9cdd1;">srvapac21</div>
<div class="t" style="left:705.6px;top:617.1px;font-size:13.4px;font-weight:700;font-style:italic;color:#e4e6e8;">1</div>
<div class="t" style="left:757.4px;top:615.9px;font-size:16px;color:#c9cdd1;">[</div>
<div class="t" style="left:778.6px;top:616.4px;font-size:14.6px;font-style:italic;color:#dfe2e5;">1</div>
<div class="t" style="left:796.0px;top:615.9px;font-size:16px;color:#c9cdd1;">]</div>
<div class="t" style="left:510.5px;top:650.0px;font-size:13.2px;letter-spacing:-0.26px;color:#c9cdd1;">172.16.10.105</div>
<div class="t" style="left:705.6px;top:648.9px;font-size:13.4px;font-weight:700;font-style:italic;color:#e4e6e8;">1</div>
<div class="t" style="left:757.4px;top:647.7px;font-size:16px;color:#c9cdd1;">[</div>
<div class="t" style="left:778.6px;top:648.2px;font-size:14.6px;font-style:italic;color:#dfe2e5;">1</div>
<div class="t" style="left:796.0px;top:647.7px;font-size:16px;color:#c9cdd1;">]</div>
<div class="t" style="left:510.5px;top:681.8px;font-size:13.2px;letter-spacing:-0.37px;color:#c9cdd1;">pc15</div>
<div class="t" style="left:705.6px;top:680.7px;font-size:13.4px;font-weight:700;font-style:italic;color:#e4e6e8;">1</div>
<div class="t" style="left:757.4px;top:679.5px;font-size:16px;color:#c9cdd1;">[</div>
<div class="t" style="left:778.6px;top:680.0px;font-size:14.6px;font-style:italic;color:#dfe2e5;">1</div>
<div class="t" style="left:796.0px;top:679.5px;font-size:16px;color:#c9cdd1;">]</div>
<div class="t" style="left:1059.2px;top:609.0px;font-size:27.2px;letter-spacing:-0.25px;color:#f4f4f4;-webkit-text-stroke:0.4px #14171a;">25</div>
<div class="t" style="left:1045.1px;top:644.7px;font-size:10.8px;font-weight:700;letter-spacing:1.40px;color:#e3e5e7;">ACTIONS</div>
<div class="t" style="left:1206.2px;top:585.4px;font-size:13px;font-weight:700;font-style:italic;letter-spacing:-0.62px;color:#f0f0f0;transform:scaleX(0.95);transform-origin:0 0;">Live Terminal (10)</div>
<div class="t" style="left:1206.2px;top:604.2px;font-size:13px;font-weight:700;font-style:italic;letter-spacing:-0.76px;color:#f0f0f0;transform:scaleX(0.95);transform-origin:0 0;">File Search (8)</div>
<div class="t" style="left:1206.2px;top:623.0px;font-size:13px;font-weight:700;font-style:italic;letter-spacing:-0.74px;color:#f0f0f0;transform:scaleX(0.95);transform-origin:0 0;">Endpoint Script Execution (5)</div>
<div class="t" style="left:1206.2px;top:641.8px;font-size:13px;font-weight:700;font-style:italic;letter-spacing:-0.59px;color:#f0f0f0;transform:scaleX(0.95);transform-origin:0 0;">Malware Scan (1)</div>
<div class="t" style="left:1206.2px;top:660.6px;font-size:13px;font-weight:700;font-style:italic;letter-spacing:-0.73px;color:#f0f0f0;transform:scaleX(0.95);transform-origin:0 0;">Destroy Files (1)</div>
</div>
</div>
</body>
</html>
